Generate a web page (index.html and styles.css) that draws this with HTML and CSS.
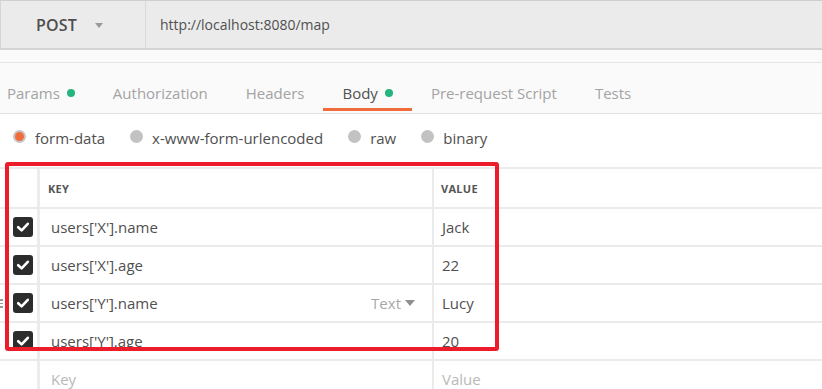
FILE: index.html
```html
<!DOCTYPE html>
<html>
<head>
<meta charset="utf-8">
<link rel="stylesheet" href="styles.css">
</head>
<body>
<div class="app">
  <div class="urlbar">
    <div class="method"><span class="method-name">POST</span><span class="caret"></span></div>
    <div class="url">http://localhost:8080/map</div>
  </div>
  <div class="spacer"></div>
  <div class="tabs">
    <div class="tab first">Params<span class="dot"></span></div>
    <div class="tab">Authorization</div>
    <div class="tab">Headers</div>
    <div class="tab active">Body<span class="dot"></span></div>
    <div class="tab">Pre-request Script</div>
    <div class="tab">Tests</div>
  </div>
  <div class="body-types">
    <label class="radio"><span class="circle selected"></span>form-data</label>
    <label class="radio"><span class="circle"></span>x-www-form-urlencoded</label>
    <label class="radio"><span class="circle"></span>raw</label>
    <label class="radio"><span class="circle"></span>binary</label>
  </div>
  <div class="table">
    <div class="row head">
      <div class="cell check"></div>
      <div class="cell key">KEY</div>
      <div class="cell value">VALUE</div>
    </div>
    <div class="row">
      <div class="cell check"><span class="box"><svg viewBox="0 0 20 20" width="20" height="20"><path d="M5.2 10.2 L8.6 13.4 L14.8 6.8" fill="none" stroke="#fff" stroke-width="2.6" stroke-linecap="round" stroke-linejoin="round"/></svg></span></div>
      <div class="cell key">users['X'].name</div>
      <div class="cell value">Jack</div>
    </div>
    <div class="row">
      <div class="cell check"><span class="box"><svg viewBox="0 0 20 20" width="20" height="20"><path d="M5.2 10.2 L8.6 13.4 L14.8 6.8" fill="none" stroke="#fff" stroke-width="2.6" stroke-linecap="round" stroke-linejoin="round"/></svg></span></div>
      <div class="cell key">users['X'].age</div>
      <div class="cell value">22</div>
    </div>
    <div class="row hover">
      <span class="handle"><i></i><i></i><i></i></span>
      <div class="cell check"><span class="box"><svg viewBox="0 0 20 20" width="20" height="20"><path d="M5.2 10.2 L8.6 13.4 L14.8 6.8" fill="none" stroke="#fff" stroke-width="2.6" stroke-linecap="round" stroke-linejoin="round"/></svg></span></div>
      <div class="cell key"><span class="key-text">users['Y'].name</span><span class="type">Text<span class="type-caret"></span></span></div>
      <div class="cell value">Lucy</div>
    </div>
    <div class="row">
      <div class="cell check"><span class="box"><svg viewBox="0 0 20 20" width="20" height="20"><path d="M5.2 10.2 L8.6 13.4 L14.8 6.8" fill="none" stroke="#fff" stroke-width="2.6" stroke-linecap="round" stroke-linejoin="round"/></svg></span></div>
      <div class="cell key">users['Y'].age</div>
      <div class="cell value">20</div>
    </div>
    <div class="row">
      <div class="cell check"></div>
      <div class="cell key placeholder">Key</div>
      <div class="cell value placeholder">Value</div>
    </div>
    <div class="annot"></div>
  </div>
</div>
</body>
</html>
```

FILE: styles.css
```css
* { box-sizing: border-box; }
html, body { margin: 0; padding: 0; }
body {
  width: 822px;
  height: 389px;
  overflow: hidden;
  background: #fff;
  font-family: "Open Sans", "Noto Sans", sans-serif;
  color: #505050;
}
.app { width: 822px; }

.urlbar {
  display: flex;
  height: 50px;
  background: #ebebeb;
  border-top: 1px solid #cfcfcf;
  border-bottom: 2px solid #d4d4d4;
  border-left: 1px solid #d6d6d6;
}
.method {
  width: 145px;
  display: flex;
  align-items: center;
  padding-left: 35px;
  border-right: 1px solid #d9d9d9;
}
.method-name {
  font-size: 16px;
  font-weight: 600;
  color: #4f4f4f;
  letter-spacing: 0.2px;
}
.caret {
  margin-left: 18px;
  width: 0; height: 0;
  border-left: 4px solid transparent;
  border-right: 4px solid transparent;
  border-top: 5px solid #9a9a9a;
  margin-top: 1px;
}
.url {
  display: flex;
  align-items: center;
  padding-left: 14px;
  font-size: 14px;
  color: #505050;
}

.spacer {
  height: 13px;
  background: #fafafa;
  border-bottom: 1px solid #e6e6e6;
}
.tabs {
  display: flex;
  height: 51px;
  background: #fafafa;
  border-bottom: 1px solid #e3e3e3;
}
.tab {
  height: 48px;
  display: flex;
  align-items: center;
  padding: 15px 19px 0 19px;
  font-size: 15px;
  color: #a3a3a3;
  border-bottom: 3px solid transparent;
  white-space: nowrap;
}
.tab.first { margin-left: -12px; }
.tab.active {
  color: #505050;
  border-bottom-color: #f26b3a;
}
.dot {
  width: 8px; height: 8px;
  border-radius: 50%;
  background: #26b47f;
  margin-left: 7px;
  margin-top: -1px;
}

.body-types {
  display: flex;
  align-items: center;
  height: 48px;
  margin-bottom: 5px;
  padding-left: 13px;
}
.radio {
  display: flex;
  align-items: center;
  font-size: 15px;
  color: #505050;
  margin-right: 25px;
}
.circle {
  width: 13px; height: 13px;
  border-radius: 50%;
  background: #c2c2c2;
  margin-right: 9px;
  margin-top: -3px;
}
.circle.selected {
  background: #f26b3a;
  border: 2px solid #c6c6c6;
}

.table { position: relative; }
.row {
  position: relative;
  display: grid;
  grid-template-columns: 37px 395px 1fr;
  height: 38px;
  border-top: 2px solid #ebebeb;
}
.row.head { height: 40px; }
.cell {
  display: flex;
  align-items: center;
  font-size: 15px;
  color: #505050;
  white-space: nowrap;
}
.cell.check { padding-left: 13px; }
.cell.key {
  border-left: 3px solid #ececec;
  padding-left: 11px;
  padding-right: 17px;
}
.cell.value {
  border-left: 2px solid #ebebeb;
  padding-left: 8px;
}
.head .cell {
  font-size: 11px;
  font-weight: 700;
  color: #555;
  letter-spacing: 0.3px;
}
.head .cell.key { padding-left: 8px; }
.head .cell.value { padding-left: 7px; }
.box {
  width: 20px; height: 20px;
  border-radius: 3px;
  background: #2c2c2c;
  display: block;
}
.box svg { display: block; }
.key-text { flex: 1; }
.type {
  display: flex;
  align-items: center;
  color: #a8a8a8;
}
.type-caret {
  width: 0; height: 0;
  border-left: 5px solid transparent;
  border-right: 5px solid transparent;
  border-top: 6px solid #8f8f8f;
  margin-left: 4px;
}
.placeholder { color: #b9b9b9; }

.handle {
  position: absolute;
  left: -3px;
  top: 14px;
  display: flex;
  flex-direction: column;
  gap: 2px;
}
.handle i {
  display: block;
  width: 6px;
  height: 1.5px;
  background: #9a9a9a;
}

.annot {
  position: absolute;
  left: 5px;
  top: -5px;
  width: 494px;
  height: 189px;
  border: 4px solid #ed1c2a;
  border-radius: 3px;
  pointer-events: none;
}
```
